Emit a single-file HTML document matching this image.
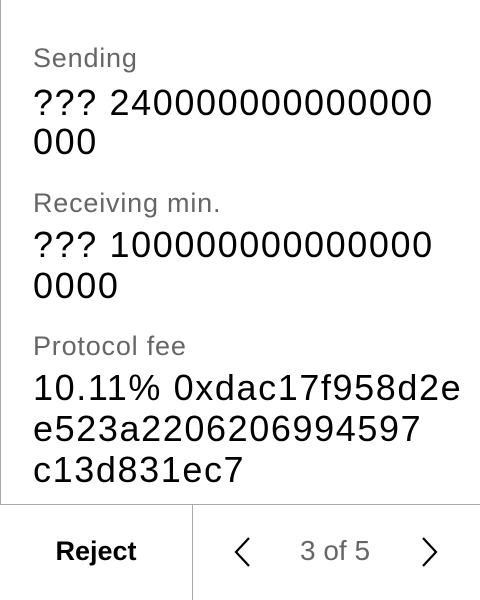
<!DOCTYPE html>
<html><head><meta charset="utf-8"><style>
html,body{margin:0;padding:0;background:#fff;}
body{width:480px;height:600px;position:relative;overflow:hidden;font-family:"Liberation Sans",sans-serif;}
.l{position:absolute;left:33px;font-size:27px;color:#666;letter-spacing:0.8px;white-space:nowrap;line-height:30px;}
.v{position:absolute;left:33px;font-size:36px;color:#000;letter-spacing:1.6px;white-space:nowrap;line-height:40px;}
</style></head><body>
<div style="position:absolute;left:0;top:0;width:1px;height:505px;background:#aaa"></div>
<div class="l" style="top:43px">Sending</div>
<div class="v" style="top:83px">??? 240000000000000</div>
<div class="v" style="top:122px">000</div>
<div class="l" style="top:188px">Receiving min.</div>
<div class="v" style="top:225px">??? 100000000000000</div>
<div class="v" style="top:266px">0000</div>
<div class="l" style="top:331px">Protocol fee</div>
<div class="v" style="top:368px">10.11% 0xdac17f958d2e</div>
<div class="v" style="top:409px">e523a2206206994597</div>
<div class="v" style="top:450px">c13d831ec7</div>
<div style="position:absolute;left:0;top:504px;width:480px;height:1px;background:#aaa"></div>
<div style="position:absolute;left:192px;top:505px;width:1px;height:95px;background:#aaa"></div>
<div style="position:absolute;left:0;top:532px;width:192px;text-align:center;font-size:27px;font-weight:bold;line-height:38px">Reject</div>
<div style="position:absolute;left:275px;top:532px;width:120px;text-align:center;font-size:28px;color:#666;line-height:38px">3 of 5</div>
<svg style="position:absolute;left:230px;top:535px" width="24" height="34" viewBox="0 0 24 34"><path d="M19 3 L6 17 L19 31" fill="none" stroke="#000" stroke-width="2.2"/></svg>
<svg style="position:absolute;left:418px;top:535px" width="24" height="34" viewBox="0 0 24 34"><path d="M5 3 L18 17 L5 31" fill="none" stroke="#000" stroke-width="2.2"/></svg>
</body></html>
